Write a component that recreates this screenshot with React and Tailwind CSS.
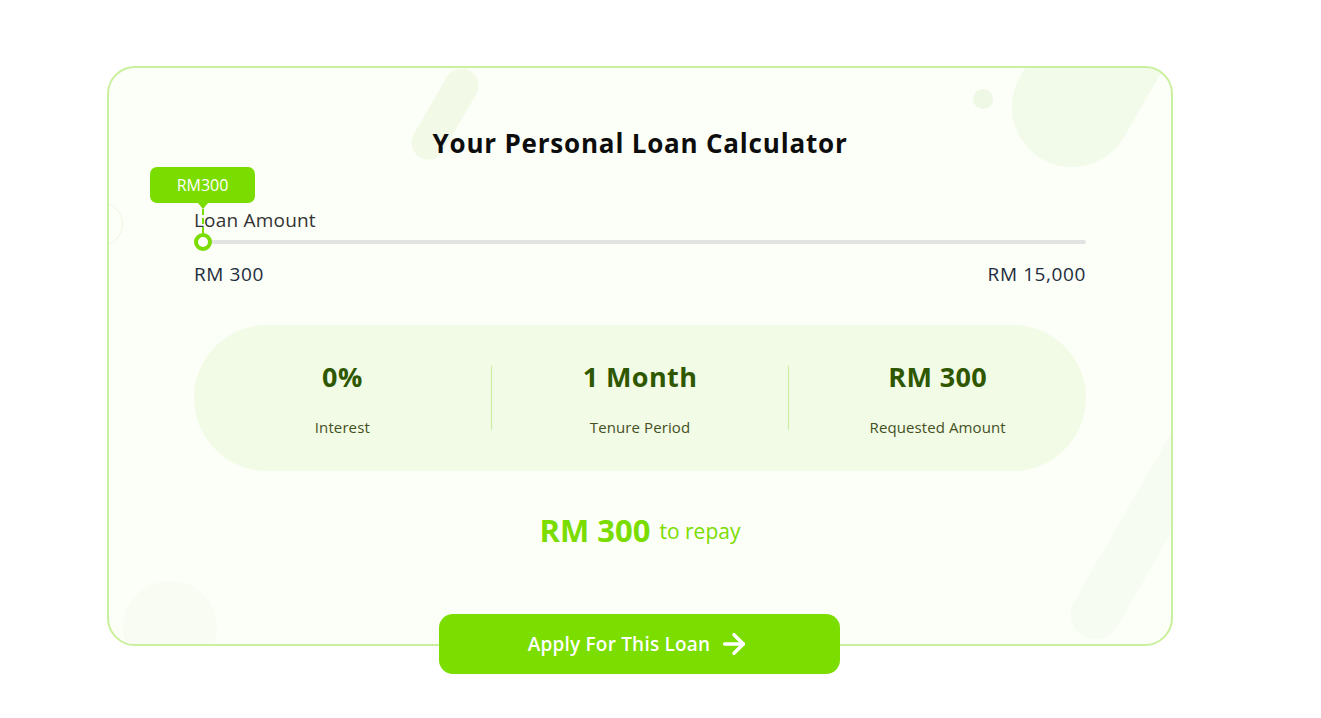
import React from "react";
import { ArrowRight } from "lucide-react";

const font = { fontFamily: "'Open Sans', 'Noto Sans', sans-serif" };

function Stat({ value, label }) {
  return (
    <div className="flex-1 flex flex-col items-center">
      <div className="text-[27px] leading-[34px] font-bold tracking-[0.4px] text-[#2f5700]">{value}</div>
      <div className="mt-[23px] text-[15px] leading-[20px] tracking-[0.1px] text-[#45501f]">{label}</div>
    </div>
  );
}

export default function App() {
  return (
    <div className="min-h-[718px] bg-white pt-[66px]" style={font}>
      <div className="ml-[107px] w-[1066px]">
        <div className="relative h-[580px] rounded-[28px] border-2 border-[#c9f09c] bg-[#fcfef8] overflow-hidden">
          {/* decorations */}
          <div className="absolute left-[319px] top-[-4px] w-[34px] h-[100px] rounded-full bg-[#f2fae7] rotate-[30deg]" />
          <div className="absolute left-[864px] top-[21px] w-[20px] h-[20px] rounded-full bg-[#eef8e4]" />
          <div className="absolute left-[948px] top-[-189px] w-[120px] h-[300px] rounded-full bg-[#f2faea] rotate-[30deg]" />
          <div className="absolute left-[1024px] top-[288px] w-[50px] h-[300px] rounded-full bg-[#f7fcf2] rotate-[30deg]" />
          <div className="absolute left-[14px] top-[513px] w-[94px] h-[94px] rounded-full bg-[#f8fcf3]" />
          <div className="absolute left-[-30px] top-[134px] w-[44px] h-[44px] rounded-full border border-[#eef6e0]" />

          <div className="relative px-[85px] pt-[59px]">
            <h1 className="text-center text-[26px] leading-[32px] font-bold tracking-[0.8px] text-[#0d0d0d]">
              Your Personal Loan Calculator
            </h1>

            <div className="relative mt-[49px]">
              <div className="text-[19px] leading-[24px] tracking-[0.2px] text-[#333333]">Loan Amount</div>
              {/* tooltip */}
              <div className="absolute left-[-44px] top-[-41px] flex flex-col items-center">
                <div className="w-[105px] h-[36px] rounded-[7px] bg-[#7bdc00] text-white text-[16px] flex items-center justify-center">
                  RM300
                </div>
                <div className="w-0 h-0 border-l-[5px] border-r-[5px] border-t-[6px] border-l-transparent border-r-transparent border-t-[#7bdc00]" />
                <div className="h-[24px] border-l-2 border-dashed border-[#7bdc00]" />
              </div>
              <div className="relative mt-[1px] h-[18px] flex items-center">
                <div className="w-full h-[4px] rounded-full bg-[#e3e3e3]" />
                <div className="absolute left-0 top-0 w-[18px] h-[18px] rounded-full border-[4px] border-[#7bdc00] bg-white" />
              </div>
              <div className="mt-[11px] flex justify-between text-[19px] leading-[24px] tracking-[0.6px] text-[#1e2c3c]">
                <span>RM 300</span>
                <span>RM 15,000</span>
              </div>
            </div>

            <div className="mt-[39px] h-[146px] rounded-full bg-[#f1fbe5] flex items-center">
              <Stat value="0%" label="Interest" />
              <div className="w-px h-[64px] bg-[#c9eca0]" />
              <Stat value="1 Month" label="Tenure Period" />
              <div className="w-px h-[64px] bg-[#c9eca0]" />
              <Stat value="RM 300" label="Requested Amount" />
            </div>

            <div className="mt-[39px] flex items-baseline justify-center text-[#7bdc00]">
              <span className="text-[31px] leading-[40px] font-bold">RM 300</span>
              <span className="relative -top-[3px] ml-[9px] text-[21px] leading-[28px]">to repay</span>
            </div>
          </div>
        </div>
        <div className="flex justify-center -mt-[32px] pr-[2px] relative">
          <button className="w-[401px] h-[60px] rounded-[14px] bg-[#7bdd00] text-white text-[19px] font-semibold tracking-[0.2px] flex items-center justify-center gap-[8px]">
            Apply For This Loan
            <ArrowRight size={32} strokeWidth={2.6} />
          </button>
        </div>
      </div>
    </div>
  );
}
